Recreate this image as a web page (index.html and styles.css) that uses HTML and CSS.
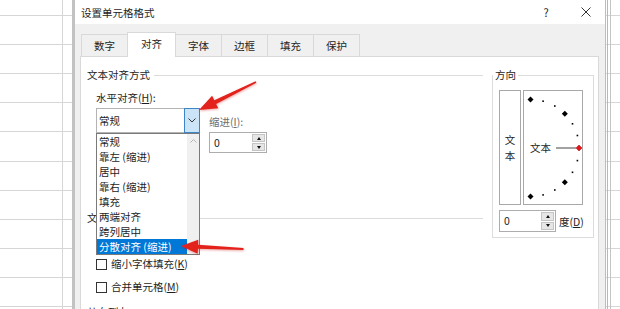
FILE: index.html
```html
<!DOCTYPE html>
<html lang="zh-CN">
<head>
  <meta charset="UTF-8">
  <title>设置单元格格式</title>
  <link rel="stylesheet" href="styles.css">
</head>
<body>

<div class="sheet sheet-left"></div>

<div class="dialog">
  <div class="titlebar">
    <span class="title">设置单元格格式</span>
    <span class="title-btn help">?</span>
    <span class="title-btn">
      <svg width="10" height="10" viewBox="0 0 10 10"><path d="M0.5 0.5 L9.5 9.5 M9.5 0.5 L0.5 9.5" stroke="#333" stroke-width="1" fill="none"/></svg>
    </span>
  </div>

  <div class="tabs">
    <div class="tab">数字</div>
    <div class="tab active">对齐</div>
    <div class="tab">字体</div>
    <div class="tab">边框</div>
    <div class="tab">填充</div>
    <div class="tab">保护</div>
  </div>

  <div class="panel">
    <div class="col-main">
      <div class="group-head"><span>文本对齐方式</span></div>
      <div class="indent">
        <div class="label">水平对齐(<u>H</u>):</div>
        <div class="row">
          <div class="combo-wrap">
            <div class="combo">
              <span class="combo-text">常规</span>
              <span class="combo-btn">
                <svg width="8" height="5" viewBox="0 0 8 5"><polyline points="0.5,0.5 4,4 7.5,0.5" stroke="#333" fill="none"/></svg>
              </span>
            </div>
            <div class="droplist">
              <ul class="items">
                <li>常规</li>
                <li>靠左 (缩进)</li>
                <li>居中</li>
                <li>靠右 (缩进)</li>
                <li>填充</li>
                <li>两端对齐</li>
                <li>跨列居中</li>
                <li class="sel">分散对齐 (缩进)</li>
              </ul>
              <div class="scroll">
                <svg width="7" height="4" viewBox="0 0 7 4"><polyline points="0.5,3.5 3.5,0.5 6.5,3.5" stroke="#b4b4b4" fill="none"/></svg>
              </div>
            </div>
          </div>
          <div class="indent-col">
            <div class="label-dim">缩进(<u>I</u>):</div>
            <div class="spin">
              <span class="spin-val">0</span>
              <span class="spin-btns"><span class="up"></span><span class="down"></span></span>
            </div>
          </div>
        </div>
      </div>

      <div class="group-head control"><span>文本控制</span></div>
      <div class="indent">
        <div class="check"><span class="box"></span><span>自动换行(<u>W</u>)</span></div>
        <div class="check"><span class="box"></span><span>缩小字体填充(<u>K</u>)</span></div>
        <div class="check"><span class="box"></span><span>合并单元格(<u>M</u>)</span></div>
      </div>

      <div class="group-head rtl"><span>从右到左</span></div>
    </div>

    <fieldset class="orient">
      <legend>方向</legend>
      <div class="orient-boxes">
        <div class="vtext"><span>文</span><span>本</span></div>
        <div class="dial">
          <svg width="58" height="113" viewBox="0 0 58 113">
            <g fill="#000">
              <path d="M6.5 5.5 l3 3 -3 3 -3 -3z"/>
              <rect x="18.3" y="9.4" width="1.6" height="1.6"/>
              <rect x="30" y="14.2" width="1.6" height="1.6"/>
              <path d="M40.8 19.7 l3 3 -3 3 -3 -3z"/>
              <rect x="47.7" y="32" width="1.6" height="1.6"/>
              <rect x="52.6" y="43.7" width="1.6" height="1.6"/>
              <rect x="52.6" y="68.8" width="1.6" height="1.6"/>
              <rect x="47.7" y="80.5" width="1.6" height="1.6"/>
              <path d="M40.8 88.3 l3 3 -3 3 -3 -3z"/>
              <rect x="30" y="98.2" width="1.6" height="1.6"/>
              <rect x="18.3" y="103.1" width="1.6" height="1.6"/>
              <path d="M6.5 102.5 l3 3 -3 3 -3 -3z"/>
            </g>
            <text x="6" y="61" class="dial-text">文本</text>
            <line x1="32" y1="57" x2="52" y2="57" stroke="#444" stroke-width="1"/>
            <path d="M55 54 l3 3 -3 3 -3 -3z" fill="#e8141a" stroke="#9a0000" stroke-width="0.5"/>
          </svg>
        </div>
      </div>
      <div class="deg-row">
        <div class="spin deg">
          <span class="spin-val">0</span>
          <span class="spin-btns"><span class="up"></span><span class="down"></span></span>
        </div>
        <span class="deg-label">度(<u>D</u>)</span>
      </div>
    </fieldset>
  </div>
</div>

<div class="sheet sheet-right"></div>

<svg class="arrows" width="620" height="309" viewBox="0 0 620 309">
  <defs>
    <filter id="soft" x="-10%" y="-30%" width="120%" height="160%">
      <feDropShadow dx="0.5" dy="1" stdDeviation="0.8" flood-color="#c00" flood-opacity="0.35"/>
    </filter>
  </defs>
  <g fill="#e3211c" filter="url(#soft)">
    <polygon points="256.4,82.7 216.1,103.9 218.3,108.3 199,110 212.1,95.8 214.3,100.3 255.6,81.3"/>
    <polygon points="243.5,248.1 198.1,244.8 198.3,239.8 181,246 197.7,253.8 197.9,248.8 243.5,249.9"/>
  </g>
</svg>

</body>
</html>
```

FILE: styles.css
```css
body {
  margin: 0;
  width: 620px;
  height: 309px;
  overflow: hidden;
  position: relative;
  display: flex;
  font-family: "Noto Sans CJK SC", sans-serif;
  font-size: 10.5px;
  color: #1e1e1e;
  background: #fff;
}

u {
  text-decoration: underline;
}

/* spreadsheet behind the dialog */
.sheet {
  flex: none;
  background-color: #fff;
}

.sheet-left {
  width: 72px;
  background-image:
    linear-gradient(to right, transparent 62px, #d6d6d6 62px, #d6d6d6 63px, transparent 63px),
    repeating-linear-gradient(to bottom, transparent 0, transparent 15px, #d6d6d6 15px, #d6d6d6 16px, transparent 16px, transparent 29.1px);
}

.sheet-right {
  flex: 1;
  background-image:
    linear-gradient(to right, transparent 1px, #b8b8b8 1px, #b8b8b8 2px, transparent 2px, transparent 4px, #c4c4c4 4px, #c4c4c4 5px, transparent 5px),
    repeating-linear-gradient(to bottom, transparent 0, transparent 15px, #d6d6d6 15px, #d6d6d6 16px, transparent 16px, transparent 29.1px);
}

/* dialog */
.dialog {
  width: 530px;
  flex: none;
  display: flex;
  flex-direction: column;
  background: #f0f0f0;
  border-left: 3px solid #c2c2c2;
  border-right: 1px solid #bdbdbd;
}

.titlebar {
  height: 24px;
  flex: none;
  background: #fff;
  display: flex;
  align-items: center;
  padding: 0 4px 0 6px;
}

.title {
  flex: 1;
}

.title-btn {
  width: 30px;
  display: flex;
  justify-content: center;
  font-size: 11px;
  color: #222;
}

.title-btn.help {
  margin-right: 10px;
}

.tabs {
  display: flex;
  align-items: flex-end;
  height: 24px;
  flex: none;
  margin-top: 8px;
  padding-left: 6px;
}

.tab {
  height: 21px;
  line-height: 21px;
  padding: 0 12px;
  border: 1px solid #d9d9d9;
  border-bottom: 0;
  margin-right: -1px;
  background: #f0f0f0;
}

.tab.active {
  height: 24px;
  line-height: 22px;
  padding: 0 13px;
  background: #fff;
  position: relative;
  z-index: 1;
  margin-bottom: -1px;
}

.panel {
  flex: 1;
  width: 519px;
  box-sizing: border-box;
  margin-left: 5px;
  background: #fff;
  border: 1px solid #d9d9d9;
  border-bottom: 0;
  display: flex;
  align-items: flex-start;
  gap: 7px;
  padding: 11px 0 0 6px;
}

.col-main {
  width: 398px;
  flex: none;
}

.group-head {
  display: flex;
  align-items: center;
  height: 14px;
  line-height: 14px;
}

.group-head::after {
  content: "";
  flex: 1;
  border-top: 1px solid #dcdcdc;
  margin: 0 2px 0 4px;
}

.group-head.control {
  margin-top: 58px;
}

.group-head.rtl {
  margin-top: 11px;
}

.indent {
  padding-left: 9px;
}

.label {
  line-height: 14px;
  margin-top: 9px;
}

.row {
  display: flex;
  align-items: flex-start;
  gap: 9px;
  margin-top: 3px;
}

/* combo + open list */
.combo-wrap {
  position: relative;
  width: 104px;
}

.combo {
  height: 25px;
  box-sizing: border-box;
  border: 1px solid #b4b4b4;
  display: flex;
  align-items: center;
  background: #fff;
}

.combo-text {
  flex: 1;
  padding-left: 2px;
}

.combo-btn {
  width: 14px;
  align-self: stretch;
  margin: -1px -1px -1px 0;
  background: #cce4f7;
  border: 1px solid #3c86c8;
  display: flex;
  align-items: center;
  justify-content: center;
}

.droplist {
  position: absolute;
  top: 25px;
  left: 0;
  width: 104px;
  box-sizing: border-box;
  border: 1px solid #7a7a7a;
  background: #fff;
  display: flex;
  z-index: 2;
}

.items {
  flex: 1;
  margin: 0;
  padding: 0;
  list-style: none;
}

.items li {
  height: 15px;
  line-height: 15px;
  padding-left: 2px;
  white-space: nowrap;
}

.items li.sel {
  background: #0078d7;
  color: #fff;
}

.scroll {
  width: 12px;
  background: #f0f0f0;
  display: flex;
  justify-content: center;
  padding-top: 5px;
  box-sizing: border-box;
}

.indent-col {
  margin-top: 7px;
}

.label-dim {
  line-height: 14px;
  color: #6d6d6d;
}

/* spinners */
.spin {
  display: flex;
  width: 58px;
  height: 21px;
  box-sizing: border-box;
  border: 1px solid #adadad;
  background: #fff;
  margin-top: 3px;
}

.spin.deg {
  width: 57px;
  height: 22px;
  margin-top: 0;
  flex: none;
}

.spin-val {
  flex: 1;
  padding-left: 4px;
  line-height: 19px;
}

.spin-btns {
  width: 13px;
  display: flex;
  flex-direction: column;
  gap: 1px;
  padding: 1px 1px 1px 0;
}

.spin-btns span {
  flex: 1;
  background: #e6e6e6;
  border: 1px solid #c4c4c4;
  display: flex;
  align-items: center;
  justify-content: center;
}

.spin-btns .up::before {
  content: "";
  border-left: 2.5px solid transparent;
  border-right: 2.5px solid transparent;
  border-bottom: 3px solid #111;
}

.spin-btns .down::before {
  content: "";
  border-left: 2.5px solid transparent;
  border-right: 2.5px solid transparent;
  border-top: 3px solid #111;
}

/* checkboxes */
.check {
  display: flex;
  align-items: center;
  gap: 4px;
  height: 14px;
  line-height: 14px;
  margin-top: 9px;
  white-space: nowrap;
}

.box {
  width: 11px;
  height: 11px;
  box-sizing: border-box;
  border: 1px solid #333;
  background: #fff;
}

/* orientation group */
.orient {
  width: 101px;
  box-sizing: border-box;
  margin: 0;
  border: 1px solid #dcdcdc;
  padding: 8px 9px 5px 6px;
}

.orient legend {
  padding: 0 2px;
  margin-left: -6px;
  line-height: 14px;
}

.orient-boxes {
  display: flex;
  gap: 2px;
}

.vtext {
  width: 22px;
  height: 115px;
  box-sizing: border-box;
  border: 1px solid #a8a8a8;
  display: flex;
  flex-direction: column;
  align-items: center;
  justify-content: center;
  line-height: 16px;
}

.dial {
  width: 60px;
  height: 115px;
  box-sizing: border-box;
  border: 1px solid #a8a8a8;
}

.dial svg {
  display: block;
}

.dial-text {
  font-family: "Noto Sans CJK SC", sans-serif;
  font-size: 10.5px;
  fill: #1e1e1e;
}

.deg-row {
  display: flex;
  align-items: center;
  gap: 3px;
  margin-top: 5px;
}

.deg-label {
  white-space: nowrap;
}

.arrows {
  position: absolute;
  left: 0;
  top: 0;
  pointer-events: none;
  z-index: 5;
}
```
